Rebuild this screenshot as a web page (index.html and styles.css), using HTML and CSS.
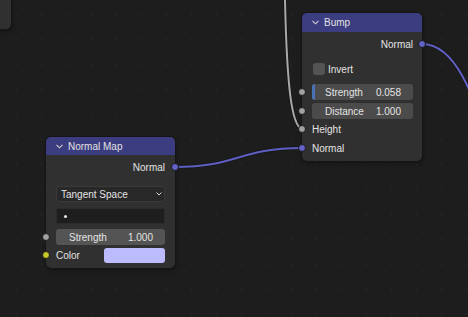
FILE: index.html
```html
<!DOCTYPE html>
<html lang="en">
<head>
    <meta charset="UTF-8">
    <title>Node Editor</title>
    <link rel="stylesheet" href="styles.css">
</head>
<body>
    <div class="canvas">
        <svg class="wires" width="468" height="317" viewBox="0 0 468 317">
            <!-- outlines -->
            <path class="wire-outline" d="M285,0 C287,90 292,126 302,129"/>
            <path class="wire-outline" d="M175,167 C238,167 239,148 302,148"/>
            <path class="wire-outline" d="M422,44 C490,44 490,250 560,250"/>
            <!-- wires -->
            <path class="wire wire-float" d="M285,0 C287,90 292,126 302,129"/>
            <path class="wire wire-vector" d="M175,167 C238,167 239,148 302,148"/>
            <path class="wire wire-vector" d="M422,44 C490,44 490,250 560,250"/>
        </svg>

        <div class="node node-corner"></div>

        <div class="node node-bump">
            <div class="node-header">
                <svg class="chevron" width="7" height="5" viewBox="0 0 7 5"><polyline points="0.5,0.8 3.5,3.8 6.5,0.8"/></svg>
                <span>Bump</span>
            </div>
            <div class="node-body">
                <div class="row row-out">
                    <span>Normal</span>
                    <i class="socket socket-out socket-vector"></i>
                </div>
                <div class="row row-check">
                    <span class="checkbox"></span>
                    <span>Invert</span>
                </div>
                <div class="row row-field first-field">
                    <i class="socket socket-in socket-float"></i>
                    <div class="field field-slider">
                        <span class="fill"></span>
                        <span>Strength</span>
                        <span>0.058</span>
                    </div>
                </div>
                <div class="row row-field next-field">
                    <i class="socket socket-in socket-float"></i>
                    <div class="field">
                        <span>Distance</span>
                        <span>1.000</span>
                    </div>
                </div>
                <div class="row row-in">
                    <i class="socket socket-in socket-float"></i>
                    <span>Height</span>
                </div>
                <div class="row row-in">
                    <i class="socket socket-in socket-vector"></i>
                    <span>Normal</span>
                </div>
            </div>
        </div>

        <div class="node node-normal-map">
            <div class="node-header">
                <svg class="chevron" width="7" height="5" viewBox="0 0 7 5"><polyline points="0.5,0.8 3.5,3.8 6.5,0.8"/></svg>
                <span>Normal Map</span>
            </div>
            <div class="node-body">
                <div class="row row-out">
                    <span>Normal</span>
                    <i class="socket socket-out socket-vector"></i>
                </div>
                <div class="row row-field dropdown-row">
                    <div class="field dropdown">
                        <span>Tangent Space</span>
                        <svg class="dropdown-arrow" width="6" height="4" viewBox="0 0 6 4"><polyline points="0.5,0.5 3,3 5.5,0.5"/></svg>
                    </div>
                </div>
                <div class="row row-field text-row">
                    <div class="field text-input">
                        <span class="dot"></span>
                    </div>
                </div>
                <div class="row row-field strength-row">
                    <i class="socket socket-in socket-float"></i>
                    <div class="field field-light">
                        <span>Strength</span>
                        <span>1.000</span>
                    </div>
                </div>
                <div class="row row-in">
                    <i class="socket socket-in socket-color"></i>
                    <span>Color</span>
                    <span class="swatch"></span>
                </div>
            </div>
        </div>
    </div>
</body>
</html>
```

FILE: styles.css
```css
body {
    margin: 0;
    background-color: #1d1d1d;
    font-family: "Liberation Sans", Arial, sans-serif;
    font-size: 10px;
    color: #e4e4e4;
}

.canvas {
    position: relative;
    width: 468px;
    height: 317px;
    overflow: hidden;
    background-color: #1d1d1d;
    background-image: radial-gradient(circle, #242424 0.8px, transparent 1.3px);
    background-size: 25px 25px;
    background-position: 4px 2px;
}

.wires {
    position: absolute;
    top: 0;
    left: 0;
}

.wire-outline {
    fill: none;
    stroke: #151515;
    stroke-width: 3.6;
}

.wire {
    fill: none;
    stroke-width: 2;
}

.wire-float {
    stroke: #a8a8a8;
}

.wire-vector {
    stroke: #5f5fc4;
}

/* Nodes */
.node {
    position: absolute;
    background-color: #303030;
    border-radius: 5px;
    box-shadow: 0 0 0 1px #151515, 1px 2px 4px rgba(0, 0, 0, 0.4);
}

.node-corner {
    left: -100px;
    top: -50px;
    width: 111px;
    height: 79px;
}

.node-bump {
    left: 302px;
    top: 13px;
    width: 120px;
}

.node-normal-map {
    left: 46px;
    top: 137px;
    width: 129px;
}

.node-header {
    display: flex;
    align-items: center;
    gap: 5px;
    height: 19px;
    padding-left: 10px;
    background-color: #3c3c80;
    border-radius: 5px 5px 0 0;
    color: #e2e2e2;
}

.node-normal-map .node-header {
    height: 18px;
}

.chevron {
    fill: none;
    stroke: #d0d0d0;
    stroke-width: 1.1;
}

.node-body {
    display: flex;
    flex-direction: column;
    padding: 2px 0 4px 0;
}

.row {
    position: relative;
    display: flex;
    align-items: center;
    padding: 0 9px 0 10px;
}

.row-out {
    height: 20px;
    justify-content: flex-end;
}

.row-check {
    height: 18px;
    gap: 3px;
    margin-top: 6px;
}

.row-in {
    height: 18px;
    margin-top: 1px;
}

.row-field {
    height: 16px;
}

.first-field {
    margin-top: 6px;
}

.next-field {
    margin-top: 3px;
}

.dropdown-row {
    margin-top: 9px;
    padding-right: 10px;
}

.text-row {
    margin-top: 6px;
    padding-right: 10px;
}

.strength-row {
    margin-top: 5px;
    padding-right: 10px;
}

.node-normal-map .row-out {
    padding-right: 10px;
}

/* Sockets */
.socket {
    position: absolute;
    top: 50%;
    width: 8px;
    height: 8px;
    margin-top: -4px;
    border-radius: 50%;
    box-sizing: border-box;
    border: 1px solid #1a1a1a;
}

.socket-in {
    left: -4px;
}

.socket-out {
    right: -4px;
}

.socket-float {
    background-color: #a1a1a1;
}

.socket-vector {
    background-color: #6363c7;
}

.socket-color {
    background-color: #c7c729;
}

/* Widgets */
.checkbox {
    width: 12px;
    height: 12px;
    border-radius: 3px;
    background-color: #545454;
    margin-left: 1px;
}

.field {
    position: relative;
    flex: 1;
    height: 16px;
    display: flex;
    align-items: center;
    justify-content: space-between;
    padding: 0 12px 0 13px;
    border-radius: 3px;
    background-color: #4b4b4b;
    overflow: hidden;
}

.field-light {
    background-color: #545454;
}

.field-slider .fill {
    position: absolute;
    left: 0;
    top: 0;
    bottom: 0;
    width: 3px;
    background-color: #4772b3;
}

.dropdown {
    padding: 0 3px 0 5px;
    background-color: #282828;
    box-shadow: inset 0 0 0 1px #3a3a3a;
}

.dropdown-arrow {
    fill: none;
    stroke: #d8d8d8;
    stroke-width: 1;
}

.text-input {
    justify-content: flex-start;
    padding-left: 8px;
    background-color: #1e1e1e;
    box-shadow: inset 0 0 0 1px #2c2c2c;
}

.dot {
    width: 3px;
    height: 3px;
    border-radius: 50%;
    background-color: #e8e8e8;
}

.row-in .swatch {
    margin-left: auto;
    width: 61px;
    height: 15px;
    border-radius: 3px;
    background-color: #bbbbfd;
}

.node-normal-map .row-in {
    padding-right: 10px;
}
```
